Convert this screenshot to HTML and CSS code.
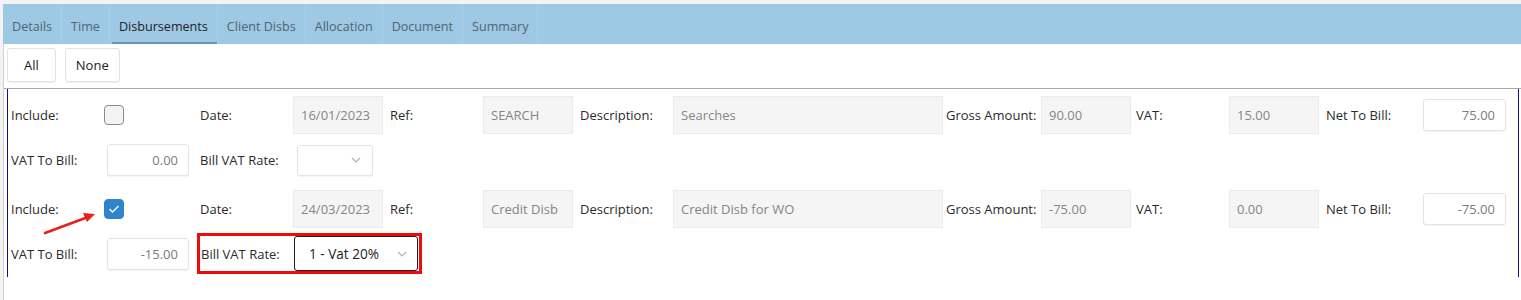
FILE: index.html
```html
<!DOCTYPE html>
<html lang="en">
<head>
    <meta charset="UTF-8">
    <title>Bill - Disbursements</title>
    <link rel="stylesheet" href="styles.css">
</head>
<body>
    <!-- Tab strip -->
    <div class="tabs">
        <a href="#" class="tab">Details</a>
        <a href="#" class="tab">Time</a>
        <a href="#" class="tab active">Disbursements</a>
        <a href="#" class="tab">Client Disbs</a>
        <a href="#" class="tab">Allocation</a>
        <a href="#" class="tab">Document</a>
        <a href="#" class="tab">Summary</a>
    </div>

    <div class="content">
        <div class="toolbar">
            <button class="btn">All</button>
            <button class="btn">None</button>
        </div>

        <div class="disb-area">
            <div class="disb-list">

                <!-- Disbursement 1 -->
                <div class="disb">
                    <div class="line main">
                        <span class="lbl">Include:</span>
                        <span class="check"></span>
                        <span class="lbl">Date:</span>
                        <span class="field">16/01/2023</span>
                        <span class="lbl">Ref:</span>
                        <span class="field">SEARCH</span>
                        <span class="lbl">Description:</span>
                        <span class="field wide">Searches</span>
                        <span class="lbl">Gross Amount:</span>
                        <span class="field">90.00</span>
                        <span class="lbl">VAT:</span>
                        <span class="field">15.00</span>
                        <span class="lbl">Net To Bill:</span>
                        <span class="edit net">75.00</span>
                    </div>
                    <div class="line sub">
                        <span class="lbl">VAT To Bill:</span>
                        <span class="edit vat">0.00</span>
                        <span class="lbl">Bill VAT Rate:</span>
                        <span class="select empty">
                            <span class="select-text"></span>
                            <svg class="chevron" width="10" height="6" viewBox="0 0 10 6"><polyline points="1,1 5,5 9,1" fill="none" stroke="#aab4c6" stroke-width="1.2"/></svg>
                        </span>
                    </div>
                </div>

                <!-- Disbursement 2 -->
                <div class="disb second">
                    <div class="line main">
                        <span class="lbl">Include:</span>
                        <span class="check checked">
                            <svg width="12" height="10" viewBox="0 0 12 10"><polyline points="1.5,5 4.5,8 10.5,2" fill="none" stroke="#fff" stroke-width="1.3"/></svg>
                        </span>
                        <span class="lbl">Date:</span>
                        <span class="field">24/03/2023</span>
                        <span class="lbl">Ref:</span>
                        <span class="field">Credit Disb</span>
                        <span class="lbl">Description:</span>
                        <span class="field wide">Credit Disb for WO</span>
                        <span class="lbl">Gross Amount:</span>
                        <span class="field">-75.00</span>
                        <span class="lbl">VAT:</span>
                        <span class="field">0.00</span>
                        <span class="lbl">Net To Bill:</span>
                        <span class="edit net">-75.00</span>
                    </div>
                    <div class="line sub tall">
                        <span class="lbl">VAT To Bill:</span>
                        <span class="edit vat">-15.00</span>
                        <span class="highlight">
                            <span class="lbl">Bill VAT Rate:</span>
                            <span class="select focused">
                                <span class="select-text">1 - Vat 20%</span>
                                <svg class="chevron" width="10" height="6" viewBox="0 0 10 6"><polyline points="1,1 5,5 9,1" fill="none" stroke="#aab4c6" stroke-width="1.2"/></svg>
                            </span>
                        </span>
                    </div>
                </div>

            </div>
        </div>
    </div>

    <!-- annotation arrow pointing at the ticked box -->
    <svg class="arrow" width="60" height="30" viewBox="0 0 60 30">
        <line x1="5" y1="25" x2="48" y2="9" stroke="#e8201a" stroke-width="2.6" stroke-linecap="round"/>
        <polygon points="55,6 43,5 47,14" fill="#e8201a"/>
    </svg>
</body>
</html>
```

FILE: styles.css
```css
body {
    margin: 0;
    padding: 0;
    background-color: #f3f3f3;
    font-family: "Open Sans", "Noto Sans", Arial, sans-serif;
    font-size: 13px;
    color: #2b2b2b;
    position: relative;
    height: 300px;
    overflow: hidden;
}

/* Tab strip */
.tabs {
    margin: 4px 0 0 3px;
    height: 40px;
    background-color: #9ec8e4;
    display: flex;
    align-items: stretch;
}

.tab {
    display: flex;
    align-items: center;
    padding: 5px 9px 0 9px;
    font-size: 12.6px;
    color: #55636e;
    text-decoration: none;
    border-right: 1px solid #a9cee6;
    position: relative;
}

.tab.active {
    color: #1e1e1e;
}

.tab.active::after {
    content: "";
    position: absolute;
    left: 2px;
    right: 0;
    bottom: 0;
    height: 2px;
    background-color: #6994b4;
}

/* Main white area */
.content {
    margin-left: 3px;
    background-color: #fff;
    border-left: 1px solid #cfcfcf;
    height: 256px;
}

.toolbar {
    display: flex;
    gap: 9px;
    padding: 4px 0 0 3px;
    height: 40px;
}

.btn {
    height: 34px;
    padding: 0 10px;
    background-color: #fff;
    border: 1px solid #e2e2e2;
    border-radius: 3px;
    box-shadow: 0 1px 1px rgba(0, 0, 0, 0.06);
    font-family: inherit;
    font-size: 13px;
    color: #222;
}

.btn:first-child {
    padding: 0 16px;
}

.disb-area {
    border-top: 1px solid #a8a8a8;
}

.disb-list {
    margin: 0 2px 0 3px;
    border-left: 1px solid #10108a;
    border-right: 1px solid #10108a;
    padding: 6px 0 3px 3px;
}

.disb.second {
    margin-top: 12px;
}

/* every line shares the same columns */
.line {
    display: grid;
    grid-template-columns: 93px 96px 93px 97px 93px 97px 93px 273px 95px 95px 93px 97px 97px 83px;
    align-items: center;
}

.line.main {
    height: 39px;
}

.line.sub {
    height: 34px;
    margin-top: 9px;
}

.line.sub.tall {
    height: 41px;
    margin-top: 5px;
}

.lbl {
    white-space: nowrap;
    color: #2b2b2b;
}

.field {
    box-sizing: border-box;
    width: 90px;
    height: 38px;
    display: flex;
    align-items: center;
    padding-left: 7px;
    background-color: #f5f5f5;
    border: 1px solid #ebebeb;
    color: #858585;
    white-space: nowrap;
    overflow: hidden;
}

.field.wide {
    width: 270px;
}

.edit {
    box-sizing: border-box;
    height: 32px;
    display: flex;
    align-items: center;
    justify-content: flex-end;
    padding-right: 10px;
    background-color: #fff;
    border: 1px solid #e4e4e4;
    border-radius: 3px;
    box-shadow: 0 1px 1px rgba(0, 0, 0, 0.05);
    color: #7b7b7b;
}

.edit.net {
    width: 83px;
}

.edit.vat {
    width: 82px;
    margin-left: 3px;
}

.check {
    box-sizing: border-box;
    width: 20px;
    height: 20px;
    border: 1px solid #8a8a8a;
    border-radius: 4px;
    background-color: #f4f4f4;
    display: flex;
    align-items: center;
    justify-content: center;
}

.check.checked {
    background-color: #2f84cc;
    border-color: #2f84cc;
}

.select {
    box-sizing: border-box;
    width: 76px;
    height: 31px;
    margin-left: 4px;
    display: flex;
    align-items: center;
    justify-content: space-between;
    padding: 0 11px 0 14px;
    background-color: #fff;
    border: 1px solid #e4e4e4;
    border-radius: 3px;
    box-shadow: 0 1px 1px rgba(0, 0, 0, 0.05);
    color: #1e1e1e;
}

.select.focused {
    width: 124px;
    height: 35px;
    margin-left: 0;
    border: 1px solid #1f1f1f;
    padding: 0 10px 0 14px;
    font-size: 13.6px;
}

.chevron {
    flex-shrink: 0;
}

/* red box drawn around the VAT rate field */
.highlight {
    grid-column: 3 / 6;
    box-sizing: border-box;
    display: flex;
    align-items: center;
    height: 41px;
    width: 225px;
    margin-left: -3px;
    padding-left: 1px;
    border: 3px solid #f00a0a;
}

.highlight .lbl {
    width: 93px;
    flex-shrink: 0;
}

/* annotation arrow */
.arrow {
    position: absolute;
    left: 40px;
    top: 208px;
}
```
